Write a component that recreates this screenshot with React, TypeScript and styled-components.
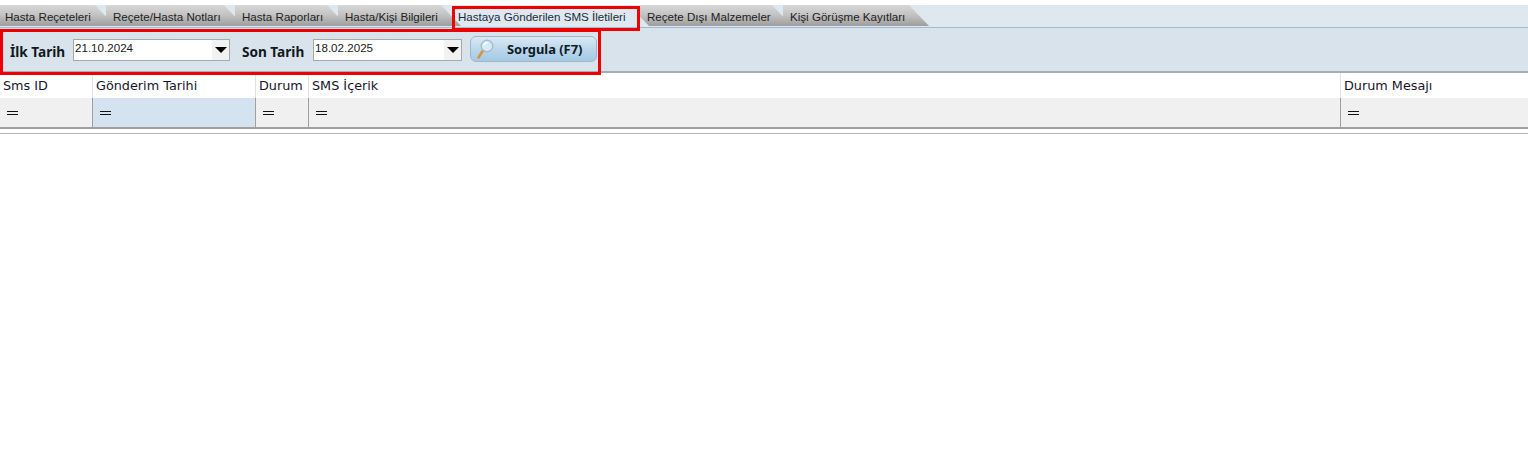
import React from 'react';
import styled, { createGlobalStyle } from 'styled-components';

const GlobalStyle = createGlobalStyle`
  html, body {
    margin: 0;
    padding: 0;
    background: #fff;
    font-family: "Liberation Sans", Arial, sans-serif;
  }
`;

const Page = styled.div`
  position: relative;
  width: 1528px;
  height: 449px;
  padding-top: 5px;
  box-sizing: border-box;
  overflow: hidden;
  background: #fff;
`;

const TabStrip = styled.div`
  position: relative;
  display: flex;
  height: 21px;
  padding-bottom: 1px;
  background: #dfe7ef;
  border-bottom: 1px solid #9dbbd6;
`;

const Tab = styled.div<{ $active?: boolean; $width: number; $z: number; $inset: number }>`
  position: relative;
  z-index: ${(p) => p.$z};
  flex: none;
  box-sizing: border-box;
  width: ${(p) => p.$width}px;
  height: 21px;
  margin-right: -9px;
  padding-left: ${(p) => p.$inset}px;
  font-size: 11.6px;
  line-height: 23px;
  white-space: nowrap;
  color: ${(p) => (p.$active ? '#1a2a3a' : '#222')};
  background: ${(p) =>
    p.$active ? '#dfe7ef' : 'linear-gradient(#d8d8d8, #c4c4c4 45%, #9e9e9e)'};
  clip-path: polygon(0 0, calc(100% - 20px) 0, 100% 100%, 0 100%);
`;

const TabCallout = styled.div`
  position: absolute;
  z-index: 20;
  left: 452px;
  top: 1px;
  width: 188px;
  height: 25px;
  box-sizing: border-box;
  border: 3px solid #ee0000;
`;

const Toolbar = styled.div`
  position: relative;
  display: flex;
  align-items: flex-start;
  height: 45px;
  box-sizing: border-box;
  padding: 8px 0 0 10px;
  background: #d9e3ec;
  border-bottom: 2px solid #a4aeb8;
`;

const ToolbarCallout = styled.div`
  position: absolute;
  z-index: 20;
  left: 0;
  top: 1px;
  width: 601px;
  height: 46px;
  box-sizing: border-box;
  border: 3px solid #ee0000;
`;

const FieldLabel = styled.span<{ $gap: number }>`
  flex: none;
  width: ${(p) => p.$gap}px;
  padding-top: 8px;
  font-family: "Noto Sans", Tahoma, sans-serif;
  font-size: 13.6px;
  font-weight: 700;
  line-height: 15px;
  white-space: nowrap;
  color: #101820;
`;

const DateBox = styled.div<{ $width: number; $after: number }>`
  display: flex;
  flex: none;
  width: ${(p) => p.$width}px;
  height: 22px;
  margin: 3px ${(p) => p.$after}px 0 0;
  box-sizing: border-box;
  border: 1px solid #a8a8a8;
  background: #fff;
`;

const DateText = styled.span`
  flex: 1;
  padding-left: 1px;
  font-size: 11.6px;
  line-height: 16px;
  color: #1a1a1a;
`;

const Arrow = styled.span`
  display: flex;
  flex: none;
  align-items: center;
  justify-content: center;
  width: 17px;
  background: #f2f2f2;

  &::before {
    content: '';
    border-top: 6px solid #000;
    border-left: 6px solid transparent;
    border-right: 6px solid transparent;
  }
`;

const QueryButton = styled.button`
  display: flex;
  flex: none;
  align-items: center;
  width: 127px;
  height: 26px;
  padding: 0 0 1px 2px;
  box-sizing: border-box;
  border: 1px solid #9db8cd;
  border-radius: 6px;
  background: linear-gradient(#dbe9f4, #bcd7ea 50%, #a3cae4);
  font-family: "Noto Sans", Tahoma, sans-serif;
  font-size: 12.9px;
  font-weight: 700;
  color: #0c1a28;
`;

const ButtonLabel = styled.span`
  margin-left: 10px;
  white-space: nowrap;
`;

const GridRow = styled.div<{ $filter?: boolean }>`
  display: grid;
  grid-template-columns: 93px 163px 53px 1032px 1fr;
  height: ${(p) => (p.$filter ? 29 : 25)}px;
  box-sizing: border-box;
  background: ${(p) => (p.$filter ? '#f0f0f0' : '#fff')};
`;

const HeadCell = styled.div`
  box-sizing: border-box;
  padding: 5px 0 0 3px;
  font-family: "DejaVu Sans", Tahoma, sans-serif;
  font-size: 12.8px;
  line-height: 16px;
  white-space: nowrap;
  border-right: 1px solid #e2e2e2;
  color: #16162a;

  &:last-child {
    border-right: 0;
  }
`;

const FilterCell = styled.div<{ $focused?: boolean }>`
  display: flex;
  align-items: center;
  box-sizing: border-box;
  padding-left: 7px;
  background: ${(p) => (p.$focused ? '#d5e3f1' : 'transparent')};
  border-right: 1px solid #a0a0a0;

  &:last-child {
    border-right: 0;
  }
`;

const EqualsMark = styled.span`
  width: 11px;
  height: 2px;
  margin-top: 1px;
  border-top: 1px solid #111;
  border-bottom: 1px solid #111;
`;

const GridRule = styled.div`
  height: 2px;
  background: #a0a0a0;
`;

const FooterRule = styled.div`
  height: 1px;
  margin-top: 4px;
  background: #b4b4b4;
`;

const tabs = [
  { label: 'Hasta Reçeteleri', width: 115, inset: 5 },
  { label: 'Reçete/Hasta Notları', width: 138, inset: 7 },
  { label: 'Hasta Raporları', width: 112, inset: 7 },
  { label: 'Hasta/Kişi Bilgileri', width: 123, inset: 7 },
  { label: 'Hastaya Gönderilen SMS İletileri', width: 197, inset: 6, active: true },
  { label: 'Reçete Dışı Malzemeler', width: 152, inset: 7 },
  { label: 'Kişi Görüşme Kayıtları', width: 146, inset: 7 },
];

const columns = ['Sms ID', 'Gönderim Tarihi', 'Durum', 'SMS İçerik', 'Durum Mesajı'];

function SearchIcon() {
  return (
    <svg width="24" height="24" viewBox="0 0 24 24">
      <path d="M10 13.5L5.5 20.5" stroke="#d8963a" strokeWidth="2.6" strokeLinecap="round" />
      <circle cx="14" cy="9" r="5.8" fill="#d6eaf8" stroke="#a9bccb" strokeWidth="1.4" />
      <path d="M10.8 8.6a3.6 3.6 0 0 1 3.6-3" stroke="#fff" strokeWidth="1.6" fill="none" />
    </svg>
  );
}

export default function App() {
  return (
    <Page>
      <GlobalStyle />
      <TabStrip>
        {tabs.map((t, i) => (
          <Tab key={t.label} $active={t.active} $width={t.width} $z={10 - i} $inset={t.inset}>
            {t.label}
          </Tab>
        ))}
        <TabCallout />
      </TabStrip>
      <Toolbar>
        <FieldLabel $gap={63}>İlk Tarih</FieldLabel>
        <DateBox $width={157} $after={12}>
          <DateText>21.10.2024</DateText>
          <Arrow />
        </DateBox>
        <FieldLabel $gap={71}>Son Tarih</FieldLabel>
        <DateBox $width={149} $after={8}>
          <DateText>18.02.2025</DateText>
          <Arrow />
        </DateBox>
        <QueryButton>
          <SearchIcon />
          <ButtonLabel>Sorgula (F7)</ButtonLabel>
        </QueryButton>
        <ToolbarCallout />
      </Toolbar>
      <GridRow>
        {columns.map((c) => (
          <HeadCell key={c}>{c}</HeadCell>
        ))}
      </GridRow>
      <GridRow $filter>
        {columns.map((c, i) => (
          <FilterCell key={c} $focused={i === 1}>
            <EqualsMark />
          </FilterCell>
        ))}
      </GridRow>
      <GridRule />
      <FooterRule />
    </Page>
  );
}
